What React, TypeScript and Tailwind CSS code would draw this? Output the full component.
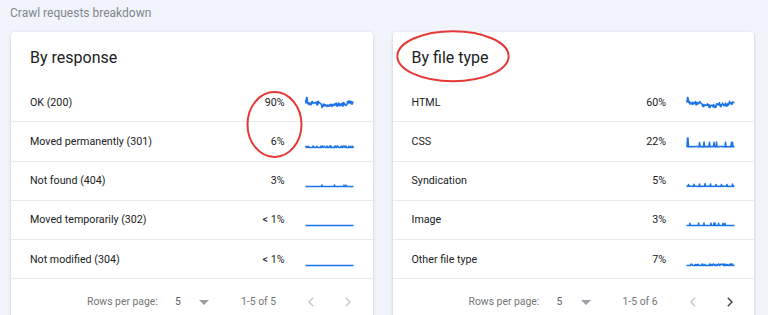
import React from "react";

type Spark = { base: number; noise: number; seed: number; shape?: "ok" | "html" | "css" | "spiky" | "flat" | "bumps" };

const mulberry = (a: number) => () => {
  a |= 0;
  a = (a + 0x6d2b79f5) | 0;
  let t = Math.imul(a ^ (a >>> 15), 1 | a);
  t = (t + Math.imul(t ^ (t >>> 7), 61 | t)) ^ t;
  return ((t ^ (t >>> 14)) >>> 0) / 4294967296;
};

// builds a ragged line, two points per pixel, like the tiny daily charts
const sparkPath = ({ base, noise, seed, shape }: Spark) => {
  const rnd = mulberry(seed);
  const pts: string[] = [];
  for (let i = 0; i <= 96; i++) {
    const x = i / 2;
    let y = base;
    const r = rnd();
    if (shape === "ok" || shape === "html") {
      const trend = x < 2 ? -3 : x < 16 ? -1 : x < 30 ? 1.5 : x < 42 ? 0.5 : -1;
      y = base + trend - r * noise + (i % 2 ? 1.2 : 0);
      if (i === 2 || i === 3) y = 1.5;
    } else if (shape === "css") {
      y = base - (r > 0.86 ? 2 + r * noise : r * 0.8);
      if (i === 2 || i === 3) y = 3;
    } else if (shape === "spiky") {
      y = base - (i % 11 === 4 ? 2 + r : r * 0.4);
    } else if (shape === "bumps") {
      y = base - (r > 0.6 ? r * noise : 0);
    } else {
      y = base - (r > 0.9 ? r * noise : 0);
    }
    pts.push(`${i === 0 ? "M" : "L"}${(x + 0.5).toFixed(1)} ${y.toFixed(1)}`);
  }
  return pts.join(" ");
};

const Sparkline = ({ s }: { s: Spark }) => (
  <svg width="49" height="16" viewBox="0 0 49 16" className="ml-[20px] shrink-0 translate-y-[1px]">
    <path d={sparkPath(s)} fill="none" stroke="#1a73e8" strokeWidth="1.5" strokeLinejoin="round" />
  </svg>
);

type Row = { label: string; pct: string; spark: Spark };

const Card = ({ title, rows, range, nextOn }: { title: string; rows: Row[]; range: string; nextOn: boolean }) => (
  <div className="bg-white rounded-[3px] shadow-[0_1px_2px_rgba(60,64,67,0.2),0_1px_3px_1px_rgba(60,64,67,0.08)]">
    <div className="h-[51px] flex items-center pl-[19px] pt-[1px] text-[16px] text-[#202124]">{title}</div>
    {rows.map((r) => (
      <div key={r.label} className="h-[39.25px] flex items-center pl-[19px] pr-[19px] pt-[1px] border-b border-[#e8eaed] text-[10.7px] text-[#202124]">
        <span className="flex-1">{r.label}</span>
        <span className="text-right">{r.pct}</span>
        <Sparkline s={r.spark} />
      </div>
    ))}
    <div className="h-[46px] flex items-center pl-[76px] text-[10.4px] text-[#757575]">
      <span className="w-[88px]">Rows per page:</span>
      <span className="w-[24px] text-[#5f6368]">5</span>
      <svg width="10" height="5" viewBox="0 0 10 5" className="mt-[1px]">
        <path d="M0 0 L10 0 L5 5 Z" fill="#9aa0a6" />
      </svg>
      <span className="w-[32px]" />
      <span className="w-[67px] text-[#757575]">{range}</span>
      <svg width="6" height="10" viewBox="0 0 6 10">
        <path d="M5.2 0.8 L1 5 L5.2 9.2" fill="none" stroke="#c4c7c5" strokeWidth="1.4" />
      </svg>
      <span className="w-[31px]" />
      <svg width="6" height="10" viewBox="0 0 6 10">
        <path d="M0.8 0.8 L5 5 L0.8 9.2" fill="none" stroke={nextOn ? "#3c4043" : "#c4c7c5"} strokeWidth="1.4" />
      </svg>
    </div>
  </div>
);

const responses: Row[] = [
  { label: "OK (200)", pct: "90%", spark: { base: 9, noise: 3, seed: 3, shape: "ok" } },
  { label: "Moved permanently (301)", pct: "6%", spark: { base: 12.5, noise: 1.6, seed: 8, shape: "bumps" } },
  { label: "Not found (404)", pct: "3%", spark: { base: 12.5, noise: 1.5, seed: 11, shape: "flat" } },
  { label: "Moved temporarily (302)", pct: "< 1%", spark: { base: 12.5, noise: 0, seed: 2, shape: "flat" } },
  { label: "Not modified (304)", pct: "< 1%", spark: { base: 12.5, noise: 0, seed: 4, shape: "flat" } },
];

const fileTypes: Row[] = [
  { label: "HTML", pct: "60%", spark: { base: 9, noise: 3, seed: 21, shape: "html" } },
  { label: "CSS", pct: "22%", spark: { base: 12, noise: 3, seed: 17, shape: "css" } },
  { label: "Syndication", pct: "5%", spark: { base: 12.5, noise: 1, seed: 5, shape: "spiky" } },
  { label: "Image", pct: "3%", spark: { base: 12.5, noise: 2.5, seed: 31, shape: "flat" } },
  { label: "Other file type", pct: "7%", spark: { base: 12.5, noise: 1.6, seed: 13, shape: "bumps" } },
];

export default function App() {
  return (
    <div className="relative h-[315px] overflow-hidden bg-[#f1f4fb] font-['Roboto',sans-serif]">
      <div className="h-[32px] pt-[4px] pl-[10px] text-[12px] leading-[18px] text-[#80868b]">Crawl requests breakdown</div>
      <div className="grid grid-cols-2 gap-[20px] pl-[11px] pr-[14px]">
        <Card title="By response" rows={responses} range="1-5 of 5" nextOn={false} />
        <Card title="By file type" rows={fileTypes} range="1-5 of 6" nextOn={true} />
      </div>
      <svg className="absolute inset-0 pointer-events-none" width="768" height="315">
        <ellipse cx="274.5" cy="124.5" rx="27" ry="32.5" fill="none" stroke="#e53935" strokeWidth="2" />
        <ellipse cx="453" cy="56.2" rx="55.6" ry="25" fill="none" stroke="#e53935" strokeWidth="2" />
      </svg>
    </div>
  );
}
